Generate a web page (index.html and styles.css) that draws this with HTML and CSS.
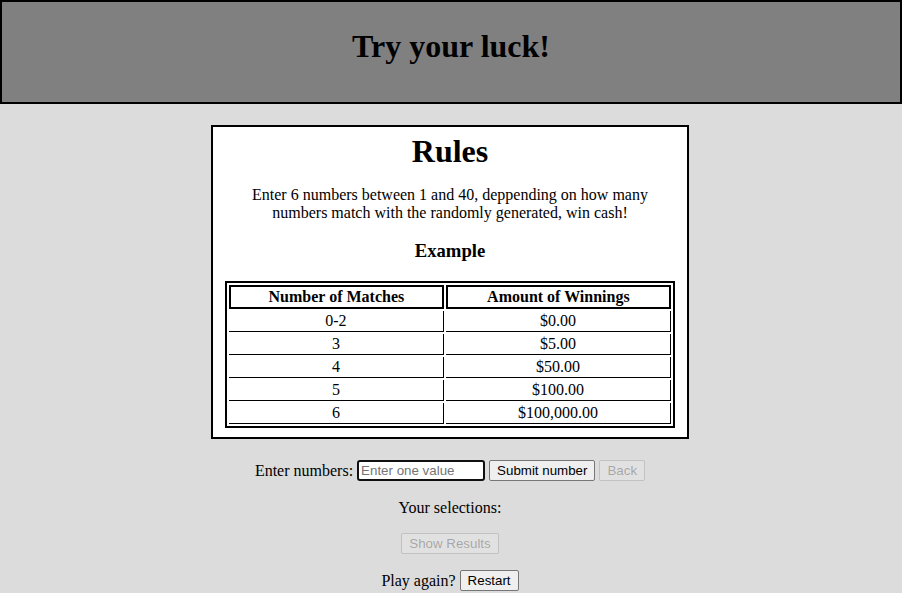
FILE: index.html
```html
<!DOCTYPE html>
<html>
<head>
<meta charset="utf-8">
<title>Try your luck!</title>
<link rel="stylesheet" href="styles.css">
</head>
<body>
<header class="banner">
  <h1 class="banner-title">Try your luck!</h1>
</header>
<main class="page">
  <section class="rules">
    <h1 class="rules-title">Rules</h1>
    <p class="rules-text">Enter 6 numbers between 1 and 40, deppending on how many numbers match with the randomly generated, win cash!</p>
    <h3 class="rules-sub">Example</h3>
    <table class="prize-table">
      <thead>
        <tr><th>Number of Matches</th><th>Amount of Winnings</th></tr>
      </thead>
      <tbody>
        <tr><td>0-2</td><td>$0.00</td></tr>
        <tr><td>3</td><td>$5.00</td></tr>
        <tr><td>4</td><td>$50.00</td></tr>
        <tr><td>5</td><td>$100.00</td></tr>
        <tr><td>6</td><td>$100,000.00</td></tr>
      </tbody>
    </table>
  </section>
  <section class="controls">
    <div class="row"><span>Enter numbers:</span><input class="num-input" type="text" placeholder="Enter one value"><button class="btn">Submit number</button><button class="btn btn-gap" disabled>Back</button></div>
    <div class="row row-text">Your selections:</div>
    <div class="row"><button class="btn" disabled>Show Results</button></div>
    <div class="row"><span>Play again?</span><button class="btn">Restart</button></div>
  </section>
</main>
</body>
</html>
```
FILE: styles.css
```css
html, body {
  margin: 0;
  padding: 0;
}
body {
  background: #dcdcdc;
  font-family: "Liberation Serif", "Times New Roman", serif;
  font-size: 16px;
  color: #000;
}
.banner {
  background: #808080;
  border: 2px solid #000;
  padding: 26px 0 37px;
  text-align: center;
}
.banner-title {
  margin: 0;
  font-size: 32px;
  line-height: 37px;
  font-weight: bold;
}
.page {
  display: flex;
  flex-direction: column;
  align-items: center;
}
.rules {
  box-sizing: border-box;
  width: 478px;
  margin-top: 21px;
  margin-right: 2px;
  background: #fff;
  border: 2px solid #000;
  padding: 0 12px 9px;
  text-align: center;
}
.rules-title {
  margin: 6px 0 0;
  font-size: 32px;
  line-height: 37px;
}
.rules-text {
  margin: 16px 0 0;
  line-height: 18px;
}
.rules-sub {
  margin: 18px 0 0;
  font-size: 18.72px;
  line-height: 22px;
}
.prize-table {
  width: 100%;
  margin-top: 19px;
  border: 2px solid #000;
  border-spacing: 2px;
}
.prize-table th {
  border: 2px solid #000;
  padding: 1px;
  line-height: 18px;
  font-weight: bold;
}
.prize-table td {
  border-right: 1px solid #000;
  border-bottom: 1px solid #000;
  padding: 1px;
  line-height: 18px;
}
.controls {
  margin-top: 21px;
  margin-right: 2px;
  display: flex;
  flex-direction: column;
  gap: 16px;
  align-items: center;
}
.row {
  display: flex;
  justify-content: center;
  align-items: center;
  gap: 4px;
  height: 21px;
  line-height: 18px;
}
.row-text {
  height: 20px;
  align-items: flex-end;
}
.btn-gap {
  margin-left: 1px;
}
.num-input {
  box-sizing: border-box;
  width: 128px;
  height: 21px;
  margin: 0;
  border: 2px solid #101010;
  border-radius: 3px;
  padding: 1px 2px;
  font-family: "Liberation Sans", Arial, sans-serif;
  font-size: 13.33px;
  background: #fff;
  outline: none;
}
.num-input::placeholder {
  color: #757575;
}
.btn {
  box-sizing: border-box;
  height: 21px;
  margin: 0;
  font-family: "Liberation Sans", Arial, sans-serif;
  font-size: 13.33px;
  padding: 0 7px;
  background: #efefef;
  color: #000;
  border: 1px solid #767676;
  border-radius: 2px;
}
.btn:disabled {
  background: rgba(239, 239, 239, 0.3);
  color: rgba(16, 16, 16, 0.3);
  border-color: rgba(118, 118, 118, 0.3);
}
```
